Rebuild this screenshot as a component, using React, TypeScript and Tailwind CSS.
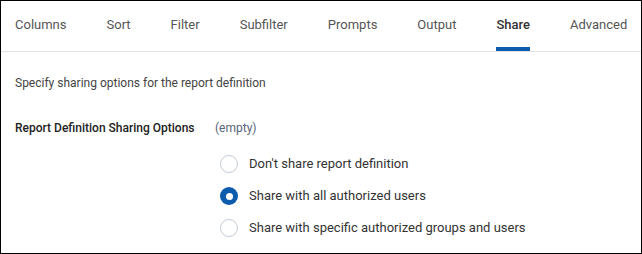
const tabs = ['Columns', 'Sort', 'Filter', 'Subfilter', 'Prompts', 'Output', 'Share', 'Advanced']

const options = [
  { label: "Don't share report definition", checked: false },
  { label: 'Share with all authorized users', checked: true },
  { label: 'Share with specific authorized groups and users', checked: false },
]

function Radio({ checked }: { checked: boolean }) {
  if (checked) {
    return (
      <span className="flex h-[18px] w-[18px] shrink-0 items-center justify-center rounded-full bg-[#0b5cad]">
        <span className="h-[7px] w-[7px] rounded-full bg-white" />
      </span>
    )
  }
  return <span className="h-[18px] w-[18px] shrink-0 rounded-full border border-[#c4ccd4] bg-white" />
}

export default function App() {
  return (
    <div className="h-[254px] w-[642px] border border-black bg-white font-['Roboto',sans-serif] text-[12px]">
      {/* Tabs */}
      <div className="flex h-[51px] border-b border-[#e2e2e2] pl-[14px]">
        {tabs.map((t) => (
          <div key={t} className="mr-[40px] flex flex-col">
            <div
              className={
                'flex flex-1 items-center pt-[1px] text-[13px] ' +
                (t === 'Share' ? 'font-medium text-[#333]' : 'text-[#555]')
              }
            >
              {t}
            </div>
            <div className={'h-[4px] ' + (t === 'Share' ? 'bg-[#0b5cad]' : '')} />
          </div>
        ))}
      </div>

      {/* Content */}
      <div className="px-[14px]">
        <p className="mt-[22px] text-[#444]">Specify sharing options for the report definition</p>

        <div className="mt-[27px] flex items-center">
          <span className="w-[200px] font-medium text-[#222]">Report Definition Sharing Options</span>
          <span className="text-[#56647a]">(empty)</span>
        </div>

        <div className="mt-[18px] flex flex-col gap-[14px] pl-[205px]">
          {options.map((o) => (
            <label key={o.label} className="flex items-center gap-[11px] text-[13px] leading-[18px] text-[#333]">
              <Radio checked={o.checked} />
              <span>{o.label}</span>
            </label>
          ))}
        </div>
      </div>
    </div>
  )
}
